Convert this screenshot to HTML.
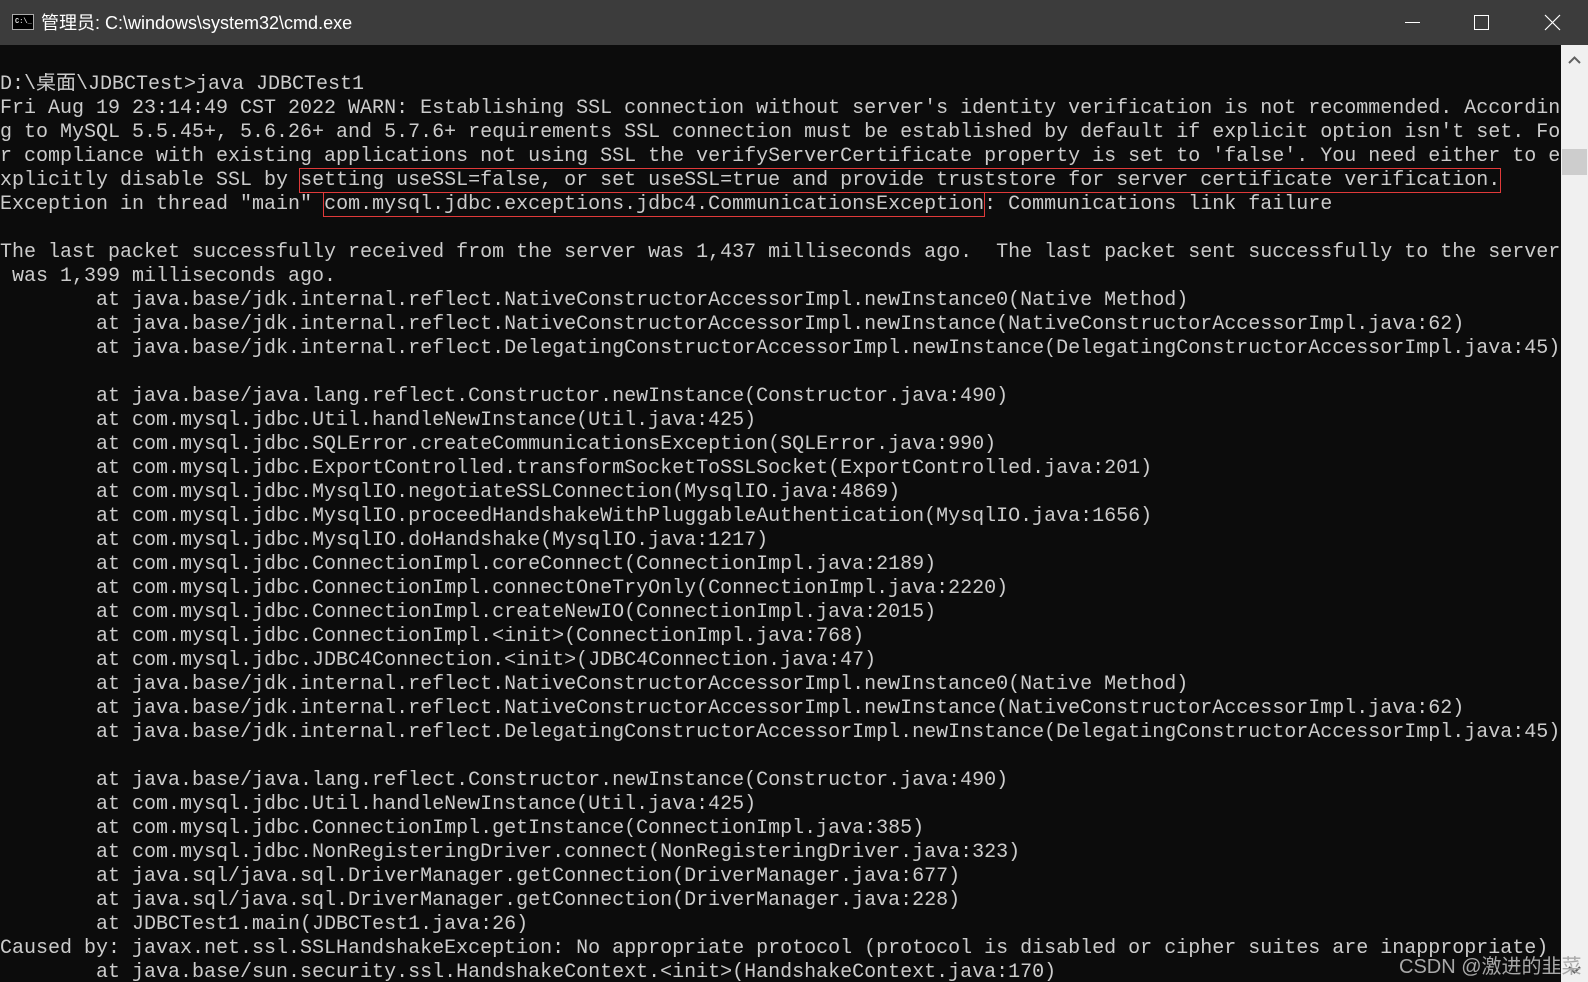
<!DOCTYPE html>
<html><head><meta charset="utf-8"><style>
html,body{margin:0;padding:0;width:1588px;height:982px;overflow:hidden;background:#0c0c0c;}
#title{position:absolute;left:0;top:0;width:1588px;height:45px;background:#3c3c3c;color:#fff;font:18px "Liberation Sans","Noto Sans CJK SC",sans-serif;}
#title .t{position:absolute;left:41px;top:9px;}
#icon{position:absolute;left:12px;top:14px;width:22px;height:16px;background:#000;border:1px solid #aaa;box-sizing:border-box;}
#icon span{position:absolute;left:2px;top:3px;color:#ddd;font:bold 7px "Liberation Mono",monospace;}
.ctl{position:absolute;top:0;height:45px;}
#con{position:absolute;left:0;top:73px;width:1560px;height:909px;overflow:hidden;}
pre{margin:0;font:20px/24px "Liberation Mono","Noto Sans CJK SC",monospace;color:#cccccc;white-space:pre;}
.b{outline:1px solid #e03a3a;outline-offset:0px;}
#sb{position:absolute;left:1561px;top:45px;width:27px;height:937px;background:#f0f0f0;}
#thumb{position:absolute;left:1562px;top:149px;width:25px;height:26px;background:#cdcdcd;}
#wm{position:absolute;left:1399px;top:950px;color:#a8a8a8;font:20px "Liberation Sans","Noto Sans CJK SC",sans-serif;}
</style></head><body>
<div id="title"><div id="icon"><span>C:\_</span></div><span class="t">管理员: C:\windows\system32\cmd.exe</span>
<svg class="ctl" style="left:1380px" width="208" height="45"><line x1="25" y1="22.5" x2="40" y2="22.5" stroke="#fff" stroke-width="1"/><rect x="94.5" y="15.5" width="14" height="14" fill="none" stroke="#fff" stroke-width="1"/><path d="M165 15L180 30M180 15L165 30" stroke="#fff" stroke-width="1.2"/></svg>
</div>
<div id="con"><pre>D:\桌面\JDBCTest&gt;java JDBCTest1
Fri Aug 19 23:14:49 CST 2022 WARN: Establishing SSL connection without server's identity verification is not recommended. Accordin
g to MySQL 5.5.45+, 5.6.26+ and 5.7.6+ requirements SSL connection must be established by default if explicit option isn't set. Fo
r compliance with existing applications not using SSL the verifyServerCertificate property is set to 'false'. You need either to e
xplicitly disable SSL by <span class="b">setting useSSL=false, or set useSSL=true and provide truststore for server certificate verification.</span>
Exception in thread "main" <span class="b">com.mysql.jdbc.exceptions.jdbc4.CommunicationsException</span>: Communications link failure

The last packet successfully received from the server was 1,437 milliseconds ago.  The last packet sent successfully to the server
 was 1,399 milliseconds ago.
        at java.base/jdk.internal.reflect.NativeConstructorAccessorImpl.newInstance0(Native Method)
        at java.base/jdk.internal.reflect.NativeConstructorAccessorImpl.newInstance(NativeConstructorAccessorImpl.java:62)
        at java.base/jdk.internal.reflect.DelegatingConstructorAccessorImpl.newInstance(DelegatingConstructorAccessorImpl.java:45)

        at java.base/java.lang.reflect.Constructor.newInstance(Constructor.java:490)
        at com.mysql.jdbc.Util.handleNewInstance(Util.java:425)
        at com.mysql.jdbc.SQLError.createCommunicationsException(SQLError.java:990)
        at com.mysql.jdbc.ExportControlled.transformSocketToSSLSocket(ExportControlled.java:201)
        at com.mysql.jdbc.MysqlIO.negotiateSSLConnection(MysqlIO.java:4869)
        at com.mysql.jdbc.MysqlIO.proceedHandshakeWithPluggableAuthentication(MysqlIO.java:1656)
        at com.mysql.jdbc.MysqlIO.doHandshake(MysqlIO.java:1217)
        at com.mysql.jdbc.ConnectionImpl.coreConnect(ConnectionImpl.java:2189)
        at com.mysql.jdbc.ConnectionImpl.connectOneTryOnly(ConnectionImpl.java:2220)
        at com.mysql.jdbc.ConnectionImpl.createNewIO(ConnectionImpl.java:2015)
        at com.mysql.jdbc.ConnectionImpl.&lt;init&gt;(ConnectionImpl.java:768)
        at com.mysql.jdbc.JDBC4Connection.&lt;init&gt;(JDBC4Connection.java:47)
        at java.base/jdk.internal.reflect.NativeConstructorAccessorImpl.newInstance0(Native Method)
        at java.base/jdk.internal.reflect.NativeConstructorAccessorImpl.newInstance(NativeConstructorAccessorImpl.java:62)
        at java.base/jdk.internal.reflect.DelegatingConstructorAccessorImpl.newInstance(DelegatingConstructorAccessorImpl.java:45)

        at java.base/java.lang.reflect.Constructor.newInstance(Constructor.java:490)
        at com.mysql.jdbc.Util.handleNewInstance(Util.java:425)
        at com.mysql.jdbc.ConnectionImpl.getInstance(ConnectionImpl.java:385)
        at com.mysql.jdbc.NonRegisteringDriver.connect(NonRegisteringDriver.java:323)
        at java.sql/java.sql.DriverManager.getConnection(DriverManager.java:677)
        at java.sql/java.sql.DriverManager.getConnection(DriverManager.java:228)
        at JDBCTest1.main(JDBCTest1.java:26)
Caused by: javax.net.ssl.SSLHandshakeException: No appropriate protocol (protocol is disabled or cipher suites are inappropriate)
        at java.base/sun.security.ssl.HandshakeContext.&lt;init&gt;(HandshakeContext.java:170)</pre></div>
<div id="sb"></div><div id="thumb"></div>
<svg style="position:absolute;left:1561px;top:50px" width="27" height="20"><path d="M8 13L13.5 7.5L19 13" fill="none" stroke="#606060" stroke-width="2"/></svg>
<svg style="position:absolute;left:1561px;top:960px" width="27" height="20"><path d="M8 7L13.5 12.5L19 7" fill="none" stroke="#606060" stroke-width="2"/></svg>
<div id="wm">CSDN @激进的韭菜</div>
</body></html>
